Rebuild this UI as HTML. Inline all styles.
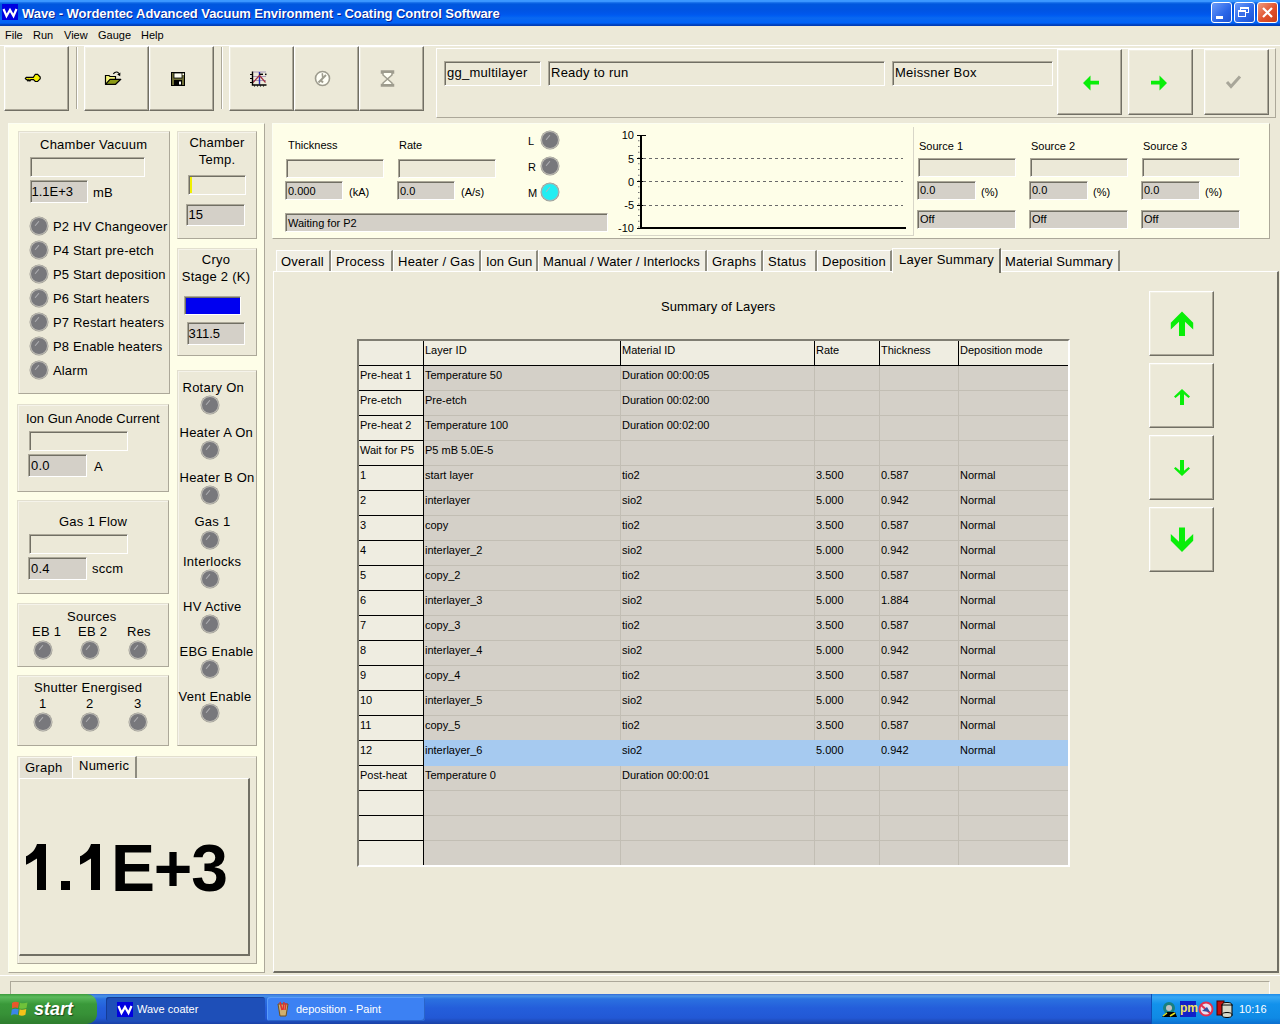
<!DOCTYPE html>
<html><head><meta charset="utf-8">
<style>
*{box-sizing:border-box}
body{margin:0;width:1280px;height:1024px;overflow:hidden;background:#ECE9D8;font-family:"Liberation Sans",sans-serif;position:relative;color:#000}
.a{position:absolute}
.t{position:absolute;font-size:13px;line-height:13px;white-space:nowrap;letter-spacing:0.25px}
.s{position:absolute;font-size:11px;line-height:11px;white-space:nowrap}
.cr{position:absolute;background:#FEFEE8;border-top:1px solid #FCFEF2;border-left:1px solid #FCFEF2;border-right:1px solid #ACA899;border-bottom:1px solid #ACA899}
.g{position:absolute;background:#ECE9D8;border-top:1px solid #E2DFCF;border-left:1px solid #E2DFCF;border-right:1px solid #ACA899;border-bottom:1px solid #ACA899;box-shadow:inset 1px 1px #F5F3EA}
.btn{position:absolute;background:#ECE9D8;border:1px solid;border-color:#fff #716F64 #716F64 #fff;box-shadow:inset -1px -1px #ACA899,inset 1px 1px #F1EFE2}
.sk{position:absolute;border:1px solid;border-color:#ACA899 #fff #fff #ACA899;box-shadow:inset 1px 1px #716F64}
.pb{background:#ECE9D8}
.vb{background:#D4D0C8}
.led{position:absolute;width:18px;height:18px;border-radius:50%;background:#78787C;border:1.5px solid #C4C2BA;box-shadow:0 0 0 0.5px #9A9890}
.led:after{content:"";position:absolute;left:3px;top:5px;width:6px;height:1px;background:#B4B4B8;transform:rotate(-50deg)}
.tab{position:absolute;top:250px;height:21px;background:#F0EEE3;border-top:1px solid #fff;border-left:1px solid #fff;border-right:2px solid #8E8C80}
</style></head><body>

<!-- Title bar -->
<div class="a" style="left:0;top:0;width:1280px;height:26px;background:linear-gradient(#3D9BFF 0px,#3A95FF 1.5px,#1A74EC 2.5px,#0058DE 4px,#0054E3 10px,#0057EC 14px,#005EF2 16px,#0A68F0 18px,#0062F8 23px,#0046C6 24.5px,#0038B0 26px)"></div>
<div class="a" style="left:2px;top:4px;width:16px;height:16px;background:#0000E0"></div>
<svg class="a" style="left:2px;top:4px" width="16" height="16"><polyline points="1.5,5 4.5,12 8,6 11.5,12 14.5,5" fill="none" stroke="#fff" stroke-width="2.2"/></svg>
<div class="a" style="left:22px;top:6.5px;font-size:13px;line-height:13px;font-weight:bold;color:#fff;white-space:nowrap;letter-spacing:-0.06px;text-shadow:1px 1px #0A1E8C">Wave - Wordentec Advanced Vacuum Environment - Coating Control Software</div>
<div class="a" style="left:1211px;top:2px;width:21px;height:21px;border:1px solid #fff;border-radius:3px;background:linear-gradient(135deg,#6C9BF9,#2A66E8 60%,#1D52D2)"><div class="a" style="left:4px;top:13px;width:7px;height:3px;background:#fff"></div></div>
<div class="a" style="left:1234px;top:2px;width:21px;height:21px;border:1px solid #fff;border-radius:3px;background:linear-gradient(135deg,#6C9BF9,#2A66E8 60%,#1D52D2)"><div class="a" style="left:5px;top:4px;width:9px;height:6px;border:1px solid #fff;border-top-width:2px"></div><div class="a" style="left:3px;top:7px;width:8px;height:7px;border:1px solid #fff;border-top-width:2px;background:#3A6FE8"></div></div>
<div class="a" style="left:1257px;top:2px;width:21px;height:21px;border:1px solid #fff;border-radius:3px;background:linear-gradient(135deg,#F09A7E,#E0512C 55%,#C9401A)"><svg class="a" style="left:3px;top:3px" width="13" height="13"><path d="M2,2 L11,11 M11,2 L2,11" stroke="#fff" stroke-width="2.2"/></svg></div>

<!-- Menu -->
<div class="s" style="left:5px;top:30px">File</div>
<div class="s" style="left:33px;top:30px">Run</div>
<div class="s" style="left:64px;top:30px">View</div>
<div class="s" style="left:98px;top:30px">Gauge</div>
<div class="s" style="left:141px;top:30px">Help</div>

<!-- toolbar -->
<div class="a" style="left:0;top:45px;width:1280px;height:1px;background:#fff"></div>
<div class="btn" style="left:4px;top:46px;width:65px;height:65px"></div>
<div class="a" style="left:76px;top:47px;width:1px;height:62px;background:#ACA899"></div><div class="a" style="left:77px;top:47px;width:1px;height:62px;background:#fff"></div>
<div class="btn" style="left:84px;top:46px;width:65px;height:65px"></div>
<div class="btn" style="left:149px;top:46px;width:65px;height:65px"></div>
<div class="a" style="left:221px;top:47px;width:1px;height:62px;background:#ACA899"></div><div class="a" style="left:222px;top:47px;width:1px;height:62px;background:#fff"></div>
<div class="btn" style="left:229px;top:46px;width:65px;height:65px"></div>
<div class="btn" style="left:294px;top:46px;width:65px;height:65px"></div>
<div class="btn" style="left:359px;top:46px;width:65px;height:65px"></div>

<!-- status panel -->
<div class="a" style="left:436px;top:48px;width:840px;height:70px;border:1px solid;border-color:#fff #ACA899 #ACA899 #fff"></div>
<div class="sk" style="left:444px;top:61px;width:97px;height:25px"></div>
<div class="t" style="left:447px;top:66px">gg_multilayer</div>
<div class="sk" style="left:548px;top:61px;width:337px;height:25px"></div>
<div class="t" style="left:551px;top:66px">Ready to run</div>
<div class="sk" style="left:892px;top:61px;width:161px;height:25px"></div>
<div class="t" style="left:895px;top:66px">Meissner Box</div>
<div class="btn" style="left:1057px;top:49px;width:65px;height:66px"></div>
<div class="btn" style="left:1128px;top:49px;width:65px;height:66px"></div>
<div class="btn" style="left:1204px;top:49px;width:65px;height:66px"></div>


<!-- toolbar icons -->
<svg class="a" style="left:24px;top:73px" width="18" height="11"><path d="M1.3,5.3 L2.3,4.3 H9.3 L11.3,1.3 H13.6 L16.2,4 V5.8 L13.6,8.5 H11.3 L9.5,6.6 H6.8 L5.9,8 L4.9,6.6 L4,8 L3.1,6.6 H2.3 Z" fill="#F4F000" stroke="#000" stroke-width="1.15"/></svg>
<svg class="a" style="left:104px;top:70px" width="18" height="16"><rect x="2" y="6" width="9.5" height="8" fill="#F5F57A"/><path d="M1.5,14.5 V5.5 H5 L6,6.5 H11.5 V9.3" fill="none" stroke="#000" stroke-width="1.2"/><path d="M1.5,14.3 L6,9.3 H16.8 L11.6,14.3 Z" fill="#8C9A14" stroke="#000" stroke-width="1.2" stroke-linejoin="round"/><path d="M9.3,3.9 Q11,1.6 13,2 Q14.3,2.3 15,3.6" fill="none" stroke="#000" stroke-width="1.1"/><path d="M13.2,4.6 L16.4,2.6 L16.2,6.2 Z" fill="#000"/></svg>
<svg class="a" style="left:171px;top:72px" width="14" height="14"><rect x="0.5" y="0.5" width="13" height="13" fill="#6E6E36" stroke="#000"/><rect x="3" y="1" width="8" height="5" fill="#FDFDF0" stroke="#000" stroke-width="0.8"/><rect x="3" y="8" width="8" height="5.5" fill="#000"/><rect x="8" y="9.5" width="2" height="3" fill="#fff"/><rect x="11.5" y="1.5" width="1.5" height="1.5" fill="#fff"/></svg>
<svg class="a" style="left:248px;top:70px" width="20" height="18"><path d="M4.5,2 H18 M4.5,6.5 H18 M4.5,10.5 H18" stroke="#A898B8" stroke-width="1"/><path d="M11.5,2 V14.5" stroke="#2828B0" stroke-width="1.4"/><path d="M5,12.5 L11.5,5.5 L17.5,12.5" stroke="#A03040" stroke-width="1.2" fill="none"/><g stroke="#000" fill="none"><path d="M4.5,1.5 V15 H18.5" stroke-width="1.4"/><path d="M2,4.5 H4 M2,8.5 H4 M2,12.5 H4 M6.5,16.5 V15.5 M9.5,16.5 V15.5 M12.5,16.5 V15.5 M15.5,16.5 V15.5" stroke-width="1"/><path d="M11.5,4.3 H15" stroke-width="1.4"/></g><rect x="17" y="3.6" width="1.5" height="1.5" fill="#000"/></svg>
<svg class="a" style="left:314px;top:70px" width="17" height="17"><circle cx="8.5" cy="8.5" r="7" fill="#FFFFF6" stroke="#9E9C8E" stroke-width="1.6"/><path d="M4.5,12.5 L12,5" stroke="#9E9C8E" stroke-width="2"/><path d="M7.5,3.5 L9,3 L9.5,7 L8,8.5 Z" fill="#9E9C8E"/><path d="M7,10.5 L9,12.5" stroke="#9E9C8E" stroke-width="2"/></svg>
<svg class="a" style="left:380px;top:70px" width="15" height="17"><path d="M1.5,1 H13.5 V3 H12 L12,5 L7.5,9 L12,13 V14.5 H13.5 V16 H1.5 V14.5 H3 V13 L7.5,9 L3,5 V3 H1.5 Z" fill="#FFFFF4" stroke="#9E9C8E" stroke-width="1.5"/><rect x="2" y="14" width="11" height="2" fill="#9E9C8E"/><rect x="2" y="1" width="11" height="2" fill="#9E9C8E"/></svg>
<svg class="a" style="left:1082px;top:74px" width="18" height="18"><path d="M1,9 L8.5,1.5 L8.5,6.8 L17,6.8 L17,10.5 L8.5,10.5 L8.5,16.5 Z" fill="#09EE09"/></svg>
<svg class="a" style="left:1150px;top:74px" width="18" height="18"><path d="M17,9 L9.5,1.5 L9.5,6.8 L1,6.8 L1,10.5 L9.5,10.5 L9.5,16.5 Z" fill="#09EE09"/></svg>
<svg class="a" style="left:1225px;top:74px" width="18" height="16"><path d="M2,8 L6,12.5 L15,2.5" fill="none" stroke="#A8A699" stroke-width="3"/></svg>

<!-- left cream panel -->
<div class="cr" style="left:8px;top:123px;width:257px;height:850px"></div>
<div class="g" style="left:18px;top:131px;width:152px;height:263px"></div>
<div class="t" style="left:40px;top:138px">Chamber Vacuum</div>
<div class="sk pb" style="left:30px;top:157px;width:115px;height:20px"></div>
<div class="sk vb" style="left:30px;top:180px;width:58px;height:23px"></div>
<div class="t" style="left:31.5px;top:185px;letter-spacing:0">1.1E+3</div>
<div class="t" style="left:93px;top:186px">mB</div>
<div class="led" style="left:30px;top:217px"></div><div class="t" style="left:53px;top:220px;letter-spacing:0.15px">P2 HV Changeover</div>
<div class="led" style="left:30px;top:241px"></div><div class="t" style="left:53px;top:244px;letter-spacing:0.15px">P4 Start pre-etch</div>
<div class="led" style="left:30px;top:265px"></div><div class="t" style="left:53px;top:268px;letter-spacing:0.15px">P5 Start deposition</div>
<div class="led" style="left:30px;top:289px"></div><div class="t" style="left:53px;top:292px;letter-spacing:0.15px">P6 Start heaters</div>
<div class="led" style="left:30px;top:313px"></div><div class="t" style="left:53px;top:316px;letter-spacing:0.15px">P7 Restart heaters</div>
<div class="led" style="left:30px;top:337px"></div><div class="t" style="left:53px;top:340px;letter-spacing:0.15px">P8 Enable heaters</div>
<div class="led" style="left:30px;top:361px"></div><div class="t" style="left:53px;top:364px;letter-spacing:0.15px">Alarm</div>

<div class="g" style="left:177px;top:131px;width:80px;height:108px"></div>
<div class="t" style="left:177px;top:136px;width:80px;text-align:center">Chamber</div>
<div class="t" style="left:177px;top:153px;width:80px;text-align:center">Temp.</div>
<div class="sk pb" style="left:188px;top:175px;width:58px;height:20px"><div class="a" style="left:1px;top:1px;width:2px;height:16px;background:#F0F000"></div></div>
<div class="sk vb" style="left:186px;top:204px;width:59px;height:22px"></div>
<div class="t" style="left:188.5px;top:208px;letter-spacing:0">15</div>

<div class="g" style="left:177px;top:248px;width:80px;height:108px"></div>
<div class="t" style="left:177px;top:253px;width:78px;text-align:center">Cryo</div>
<div class="t" style="left:177px;top:270px;width:78px;text-align:center">Stage 2 (K)</div>
<div class="sk" style="left:184px;top:296px;width:57px;height:19px;background:#0000F0"></div>
<div class="sk vb" style="left:187px;top:322px;width:58px;height:23px"></div>
<div class="t" style="left:188.5px;top:327px;letter-spacing:0">311.5</div>

<div class="g" style="left:177px;top:370px;width:80px;height:376px"></div>
<div class="t" style="left:182.5px;top:381px">Rotary On</div><div class="led" style="left:201px;top:396px"></div>
<div class="t" style="left:179.5px;top:426px">Heater A On</div><div class="led" style="left:201px;top:441px"></div>
<div class="t" style="left:179.5px;top:471px">Heater B On</div><div class="led" style="left:201px;top:486px"></div>
<div class="t" style="left:194.5px;top:515px">Gas 1</div><div class="led" style="left:201px;top:531px"></div>
<div class="t" style="left:183px;top:555px">Interlocks</div><div class="led" style="left:201px;top:570px"></div>
<div class="t" style="left:183px;top:600px">HV Active</div><div class="led" style="left:201px;top:615px"></div>
<div class="t" style="left:179.5px;top:645px">EBG Enable</div><div class="led" style="left:201px;top:660px"></div>
<div class="t" style="left:178.5px;top:690px">Vent Enable</div><div class="led" style="left:201px;top:704px"></div>

<div class="g" style="left:17px;top:404px;width:152px;height:88px"></div>
<div class="t" style="left:26px;top:412px;letter-spacing:0">Ion Gun Anode Current</div>
<div class="sk pb" style="left:29px;top:431px;width:99px;height:20px"></div>
<div class="sk vb" style="left:28px;top:454px;width:59px;height:23px"></div>
<div class="t" style="left:31px;top:459px">0.0</div>
<div class="t" style="left:94px;top:460px">A</div>

<div class="g" style="left:17px;top:500px;width:152px;height:94px"></div>
<div class="t" style="left:59px;top:515px">Gas 1 Flow</div>
<div class="sk pb" style="left:29px;top:534px;width:99px;height:20px"></div>
<div class="sk vb" style="left:28px;top:557px;width:59px;height:23px"></div>
<div class="t" style="left:31px;top:562px">0.4</div>
<div class="t" style="left:92px;top:562px">sccm</div>

<div class="g" style="left:17px;top:603px;width:152px;height:64px"></div>
<div class="t" style="left:67px;top:610px">Sources</div>
<div class="t" style="left:32px;top:625px">EB 1</div>
<div class="t" style="left:78px;top:625px">EB 2</div>
<div class="t" style="left:127px;top:625px">Res</div>
<div class="led" style="left:34px;top:641px"></div><div class="led" style="left:81px;top:641px"></div><div class="led" style="left:129px;top:641px"></div>

<div class="g" style="left:17px;top:675px;width:152px;height:71px"></div>
<div class="t" style="left:34px;top:681px">Shutter Energised</div>
<div class="t" style="left:39px;top:697px">1</div>
<div class="t" style="left:86px;top:697px">2</div>
<div class="t" style="left:134px;top:697px">3</div>
<div class="led" style="left:34px;top:713px"></div><div class="led" style="left:81px;top:713px"></div><div class="led" style="left:129px;top:713px"></div>

<!-- bottom tabs (Graph/Numeric) -->
<div class="g" style="left:17px;top:756px;width:240px;height:208px"></div>
<div class="a" style="left:19px;top:757px;width:53px;height:22px;background:#E4E1D4;border-top:1px solid #F8F7F0;border-left:1px solid #F8F7F0"></div>
<div class="t" style="left:25px;top:761px">Graph</div>
<div class="a" style="left:72px;top:756px;width:65px;height:23px;background:#ECE9D8;border-top:1px solid #fff;border-left:1px solid #fff;border-right:2px solid #8E8C80"></div>
<div class="t" style="left:79px;top:759px">Numeric</div>
<div class="a" style="left:19px;top:778px;width:231px;height:178px;background:#ECE9D8;border-top:1px solid #fff;border-left:1px solid #fff;border-right:2px solid #716F64;border-bottom:2px solid #716F64"></div>
<svg class="a" style="left:0;top:830px" width="120" height="70"><g fill="#000" transform="translate(0,-830)"><path d="M26,856.3 C31,854 35,850.5 37,844 H46 V890 H37 V858.4 C33,861 29.5,863 26,864.7 Z"/><rect x="61" y="881" width="9" height="9"/><path d="M80,856.3 C85,854 89,850.5 91,844 H100 V890 H91 V858.4 C87,861 83.5,863 80,864.7 Z"/></g></svg>
<div class="a" style="left:111px;top:835px;font-size:66px;line-height:66px;font-weight:bold;letter-spacing:-1.2px;white-space:nowrap">E+3</div>


<!-- top right cream panel -->
<div class="cr" style="left:272px;top:123px;width:998px;height:116px"></div>
<div class="s" style="left:288px;top:140px">Thickness</div>
<div class="sk pb" style="left:286px;top:159px;width:98px;height:19px"></div>
<div class="sk vb" style="left:285px;top:181px;width:58px;height:19px"></div>
<div class="s" style="left:288px;top:186px">0.000</div>
<div class="s" style="left:349px;top:187px">(kA)</div>
<div class="s" style="left:399px;top:140px">Rate</div>
<div class="sk pb" style="left:398px;top:159px;width:98px;height:19px"></div>
<div class="sk vb" style="left:397px;top:181px;width:58px;height:19px"></div>
<div class="s" style="left:400px;top:186px">0.0</div>
<div class="s" style="left:461px;top:187px">(A/s)</div>
<div class="sk vb" style="left:285px;top:213px;width:323px;height:19px"></div>
<div class="s" style="left:288px;top:218px">Waiting for P2</div>
<div class="s" style="left:528px;top:136px">L</div><div class="led" style="left:541px;top:131px"></div>
<div class="s" style="left:528px;top:162px">R</div><div class="led" style="left:541px;top:157px"></div>
<div class="s" style="left:528px;top:188px">M</div><div class="led" style="left:541px;top:183px;background:#22EEF2;border-color:#A8B4B4"></div>
<div class="a" style="left:620px;top:127px;width:294px;height:109px;border-right:1px solid #D8D6C8;border-bottom:1px solid #D8D6C8"></div>
<svg class="a" style="left:600px;top:128px" width="320" height="110">
<g font-family="Liberation Sans" font-size="11" text-anchor="end" fill="#000"><text x="34" y="11">10</text><text x="34" y="34.5">5</text><text x="34" y="57.5">0</text><text x="34" y="81">-5</text><text x="34" y="104">-10</text></g>
<path d="M38.75,12.25 V100" stroke="#707070" stroke-width="1.5" stroke-dasharray="1,4.75"/>
<path d="M41,7 V100 H306" stroke="#000" stroke-width="2" fill="none"/>
<path d="M37,7.5 H46 M37,30.5 H44 M37,53.5 H44 M37,77.5 H44 M37,100.5 H42" stroke="#000" stroke-width="1"/>
<path d="M43,30.5 H303 M43,53.5 H303 M43,77.5 H303" stroke="#6A6A6A" stroke-width="1" stroke-dasharray="3,3"/>
</svg>
<div class="s" style="left:919px;top:141px">Source 1</div>
<div class="sk pb" style="left:918px;top:158px;width:98px;height:19px"></div>
<div class="sk vb" style="left:917px;top:181px;width:59px;height:19px"></div>
<div class="s" style="left:920px;top:185px">0.0</div>
<div class="s" style="left:981px;top:187px">(%)</div>
<div class="sk vb" style="left:917px;top:210px;width:99px;height:19px"></div>
<div class="s" style="left:920px;top:214px">Off</div>
<div class="s" style="left:1031px;top:141px">Source 2</div>
<div class="sk pb" style="left:1030px;top:158px;width:98px;height:19px"></div>
<div class="sk vb" style="left:1029px;top:181px;width:59px;height:19px"></div>
<div class="s" style="left:1032px;top:185px">0.0</div>
<div class="s" style="left:1093px;top:187px">(%)</div>
<div class="sk vb" style="left:1029px;top:210px;width:99px;height:19px"></div>
<div class="s" style="left:1032px;top:214px">Off</div>
<div class="s" style="left:1143px;top:141px">Source 3</div>
<div class="sk pb" style="left:1142px;top:158px;width:98px;height:19px"></div>
<div class="sk vb" style="left:1141px;top:181px;width:59px;height:19px"></div>
<div class="s" style="left:1144px;top:185px">0.0</div>
<div class="s" style="left:1205px;top:187px">(%)</div>
<div class="sk vb" style="left:1141px;top:210px;width:99px;height:19px"></div>
<div class="s" style="left:1144px;top:214px">Off</div>

<!-- tab strip -->
<div class="a" style="left:273px;top:271px;width:1006px;height:702px;background:#ECE9D8;border-top:1px solid #fff;border-left:1px solid #fff;border-right:2px solid #716F64;border-bottom:2px solid #716F64"></div>
<div class="tab" style="left:276px;width:55px"></div><div class="t" style="left:281px;top:255px">Overall</div>
<div class="tab" style="left:331px;width:62px"></div><div class="t" style="left:336px;top:255px">Process</div>
<div class="tab" style="left:393px;width:88px"></div><div class="t" style="left:398px;top:255px">Heater / Gas</div>
<div class="tab" style="left:481px;width:57px"></div><div class="t" style="left:486px;top:255px;letter-spacing:0">Ion Gun</div>
<div class="tab" style="left:538px;width:169px"></div><div class="t" style="left:543px;top:255px;letter-spacing:0.1px">Manual / Water / Interlocks</div>
<div class="tab" style="left:707px;width:56px"></div><div class="t" style="left:712px;top:255px">Graphs</div>
<div class="tab" style="left:763px;width:54px"></div><div class="t" style="left:768px;top:255px">Status</div>
<div class="tab" style="left:817px;width:75px"></div><div class="t" style="left:822px;top:255px">Deposition</div>
<div class="a" style="left:892px;top:248px;width:109px;height:25px;background:#ECE9D8;border-top:1px solid #fff;border-left:1px solid #fff;border-right:2px solid #716F64"></div><div class="t" style="left:899px;top:253px">Layer Summary</div>
<div class="tab" style="left:1001px;width:119px"></div><div class="t" style="left:1005px;top:255px;letter-spacing:0.15px">Material Summary</div>

<div class="t" style="left:661px;top:300px;letter-spacing:0.1px">Summary of Layers</div>


<!-- table -->
<div class="a" style="left:357px;top:339px;width:713px;height:528px;border:2px solid;border-color:#7F7D72 #fff #fff #7F7D72"></div>
<div class="a" style="left:359px;top:341px;width:709px;height:25px;background:#EFEDE1"></div>
<div class="a" style="left:359px;top:366px;width:64px;height:499px;background:#EFEDE1"></div>
<div class="a" style="left:424px;top:366px;width:644px;height:499px;background:#D4D0C8"></div>
<div class="a" style="left:424px;top:390px;width:644px;height:1px;background:#C2BEB4"></div>
<div class="a" style="left:359px;top:390px;width:64px;height:1px;background:#000"></div>
<div class="a" style="left:424px;top:415px;width:644px;height:1px;background:#C2BEB4"></div>
<div class="a" style="left:359px;top:415px;width:64px;height:1px;background:#000"></div>
<div class="a" style="left:424px;top:440px;width:644px;height:1px;background:#C2BEB4"></div>
<div class="a" style="left:359px;top:440px;width:64px;height:1px;background:#000"></div>
<div class="a" style="left:424px;top:465px;width:644px;height:1px;background:#C2BEB4"></div>
<div class="a" style="left:359px;top:465px;width:64px;height:1px;background:#000"></div>
<div class="a" style="left:424px;top:490px;width:644px;height:1px;background:#C2BEB4"></div>
<div class="a" style="left:359px;top:490px;width:64px;height:1px;background:#000"></div>
<div class="a" style="left:424px;top:515px;width:644px;height:1px;background:#C2BEB4"></div>
<div class="a" style="left:359px;top:515px;width:64px;height:1px;background:#000"></div>
<div class="a" style="left:424px;top:540px;width:644px;height:1px;background:#C2BEB4"></div>
<div class="a" style="left:359px;top:540px;width:64px;height:1px;background:#000"></div>
<div class="a" style="left:424px;top:565px;width:644px;height:1px;background:#C2BEB4"></div>
<div class="a" style="left:359px;top:565px;width:64px;height:1px;background:#000"></div>
<div class="a" style="left:424px;top:590px;width:644px;height:1px;background:#C2BEB4"></div>
<div class="a" style="left:359px;top:590px;width:64px;height:1px;background:#000"></div>
<div class="a" style="left:424px;top:615px;width:644px;height:1px;background:#C2BEB4"></div>
<div class="a" style="left:359px;top:615px;width:64px;height:1px;background:#000"></div>
<div class="a" style="left:424px;top:640px;width:644px;height:1px;background:#C2BEB4"></div>
<div class="a" style="left:359px;top:640px;width:64px;height:1px;background:#000"></div>
<div class="a" style="left:424px;top:665px;width:644px;height:1px;background:#C2BEB4"></div>
<div class="a" style="left:359px;top:665px;width:64px;height:1px;background:#000"></div>
<div class="a" style="left:424px;top:690px;width:644px;height:1px;background:#C2BEB4"></div>
<div class="a" style="left:359px;top:690px;width:64px;height:1px;background:#000"></div>
<div class="a" style="left:424px;top:715px;width:644px;height:1px;background:#C2BEB4"></div>
<div class="a" style="left:359px;top:715px;width:64px;height:1px;background:#000"></div>
<div class="a" style="left:424px;top:740px;width:644px;height:1px;background:#C2BEB4"></div>
<div class="a" style="left:359px;top:740px;width:64px;height:1px;background:#000"></div>
<div class="a" style="left:424px;top:765px;width:644px;height:1px;background:#C2BEB4"></div>
<div class="a" style="left:359px;top:765px;width:64px;height:1px;background:#000"></div>
<div class="a" style="left:424px;top:790px;width:644px;height:1px;background:#C2BEB4"></div>
<div class="a" style="left:359px;top:790px;width:64px;height:1px;background:#000"></div>
<div class="a" style="left:424px;top:815px;width:644px;height:1px;background:#C2BEB4"></div>
<div class="a" style="left:359px;top:815px;width:64px;height:1px;background:#000"></div>
<div class="a" style="left:424px;top:840px;width:644px;height:1px;background:#C2BEB4"></div>
<div class="a" style="left:359px;top:840px;width:64px;height:1px;background:#000"></div>
<div class="a" style="left:620px;top:366px;width:1px;height:499px;background:#C2BEB4"></div>
<div class="a" style="left:814px;top:366px;width:1px;height:499px;background:#C2BEB4"></div>
<div class="a" style="left:879px;top:366px;width:1px;height:499px;background:#C2BEB4"></div>
<div class="a" style="left:958px;top:366px;width:1px;height:499px;background:#C2BEB4"></div>
<div class="a" style="left:359px;top:365px;width:709px;height:1px;background:#000"></div>
<div class="a" style="left:423px;top:341px;width:1px;height:25px;background:#000"></div>
<div class="a" style="left:620px;top:341px;width:1px;height:25px;background:#000"></div>
<div class="a" style="left:814px;top:341px;width:1px;height:25px;background:#000"></div>
<div class="a" style="left:879px;top:341px;width:1px;height:25px;background:#000"></div>
<div class="a" style="left:958px;top:341px;width:1px;height:25px;background:#000"></div>
<div class="a" style="left:423px;top:366px;width:1px;height:499px;background:#000"></div>
<div class="a" style="left:424px;top:740px;width:644px;height:26px;background:#A6CAF0"></div>
<div class="s" style="left:425px;top:345px">Layer ID</div>
<div class="s" style="left:622px;top:345px">Material ID</div>
<div class="s" style="left:816px;top:345px">Rate</div>
<div class="s" style="left:881px;top:345px">Thickness</div>
<div class="s" style="left:960px;top:345px">Deposition mode</div>
<div class="s" style="left:360px;top:370px">Pre-heat 1</div>
<div class="s" style="left:425px;top:370px">Temperature 50</div>
<div class="s" style="left:622px;top:370px">Duration 00:00:05</div>
<div class="s" style="left:360px;top:395px">Pre-etch</div>
<div class="s" style="left:425px;top:395px">Pre-etch</div>
<div class="s" style="left:622px;top:395px">Duration 00:02:00</div>
<div class="s" style="left:360px;top:420px">Pre-heat 2</div>
<div class="s" style="left:425px;top:420px">Temperature 100</div>
<div class="s" style="left:622px;top:420px">Duration 00:02:00</div>
<div class="s" style="left:360px;top:445px">Wait for P5</div>
<div class="s" style="left:425px;top:445px">P5 mB 5.0E-5</div>
<div class="s" style="left:360px;top:470px">1</div>
<div class="s" style="left:425px;top:470px">start layer</div>
<div class="s" style="left:622px;top:470px">tio2</div>
<div class="s" style="left:816px;top:470px">3.500</div>
<div class="s" style="left:881px;top:470px">0.587</div>
<div class="s" style="left:960px;top:470px">Normal</div>
<div class="s" style="left:360px;top:495px">2</div>
<div class="s" style="left:425px;top:495px">interlayer</div>
<div class="s" style="left:622px;top:495px">sio2</div>
<div class="s" style="left:816px;top:495px">5.000</div>
<div class="s" style="left:881px;top:495px">0.942</div>
<div class="s" style="left:960px;top:495px">Normal</div>
<div class="s" style="left:360px;top:520px">3</div>
<div class="s" style="left:425px;top:520px">copy</div>
<div class="s" style="left:622px;top:520px">tio2</div>
<div class="s" style="left:816px;top:520px">3.500</div>
<div class="s" style="left:881px;top:520px">0.587</div>
<div class="s" style="left:960px;top:520px">Normal</div>
<div class="s" style="left:360px;top:545px">4</div>
<div class="s" style="left:425px;top:545px">interlayer_2</div>
<div class="s" style="left:622px;top:545px">sio2</div>
<div class="s" style="left:816px;top:545px">5.000</div>
<div class="s" style="left:881px;top:545px">0.942</div>
<div class="s" style="left:960px;top:545px">Normal</div>
<div class="s" style="left:360px;top:570px">5</div>
<div class="s" style="left:425px;top:570px">copy_2</div>
<div class="s" style="left:622px;top:570px">tio2</div>
<div class="s" style="left:816px;top:570px">3.500</div>
<div class="s" style="left:881px;top:570px">0.587</div>
<div class="s" style="left:960px;top:570px">Normal</div>
<div class="s" style="left:360px;top:595px">6</div>
<div class="s" style="left:425px;top:595px">interlayer_3</div>
<div class="s" style="left:622px;top:595px">sio2</div>
<div class="s" style="left:816px;top:595px">5.000</div>
<div class="s" style="left:881px;top:595px">1.884</div>
<div class="s" style="left:960px;top:595px">Normal</div>
<div class="s" style="left:360px;top:620px">7</div>
<div class="s" style="left:425px;top:620px">copy_3</div>
<div class="s" style="left:622px;top:620px">tio2</div>
<div class="s" style="left:816px;top:620px">3.500</div>
<div class="s" style="left:881px;top:620px">0.587</div>
<div class="s" style="left:960px;top:620px">Normal</div>
<div class="s" style="left:360px;top:645px">8</div>
<div class="s" style="left:425px;top:645px">interlayer_4</div>
<div class="s" style="left:622px;top:645px">sio2</div>
<div class="s" style="left:816px;top:645px">5.000</div>
<div class="s" style="left:881px;top:645px">0.942</div>
<div class="s" style="left:960px;top:645px">Normal</div>
<div class="s" style="left:360px;top:670px">9</div>
<div class="s" style="left:425px;top:670px">copy_4</div>
<div class="s" style="left:622px;top:670px">tio2</div>
<div class="s" style="left:816px;top:670px">3.500</div>
<div class="s" style="left:881px;top:670px">0.587</div>
<div class="s" style="left:960px;top:670px">Normal</div>
<div class="s" style="left:360px;top:695px">10</div>
<div class="s" style="left:425px;top:695px">interlayer_5</div>
<div class="s" style="left:622px;top:695px">sio2</div>
<div class="s" style="left:816px;top:695px">5.000</div>
<div class="s" style="left:881px;top:695px">0.942</div>
<div class="s" style="left:960px;top:695px">Normal</div>
<div class="s" style="left:360px;top:720px">11</div>
<div class="s" style="left:425px;top:720px">copy_5</div>
<div class="s" style="left:622px;top:720px">tio2</div>
<div class="s" style="left:816px;top:720px">3.500</div>
<div class="s" style="left:881px;top:720px">0.587</div>
<div class="s" style="left:960px;top:720px">Normal</div>
<div class="s" style="left:360px;top:745px">12</div>
<div class="s" style="left:425px;top:745px">interlayer_6</div>
<div class="s" style="left:622px;top:745px">sio2</div>
<div class="s" style="left:816px;top:745px">5.000</div>
<div class="s" style="left:881px;top:745px">0.942</div>
<div class="s" style="left:960px;top:745px">Normal</div>
<div class="s" style="left:360px;top:770px">Post-heat</div>
<div class="s" style="left:425px;top:770px">Temperature 0</div>
<div class="s" style="left:622px;top:770px">Duration 00:00:01</div>
<!-- arrow buttons -->
<div class="btn" style="left:1149px;top:291px;width:65px;height:65px"></div>
<div class="btn" style="left:1149px;top:363px;width:65px;height:65px"></div>
<div class="btn" style="left:1149px;top:435px;width:65px;height:65px"></div>
<div class="btn" style="left:1149px;top:507px;width:65px;height:65px"></div>
<svg class="a" style="left:1160px;top:300px" width="44" height="44"><path d="M22,11.5 L33.2,22.8 L33.2,29.5 L25,21.8 L25,36 L19,36 L19,21.8 L10.8,29.5 L10.8,22.8 Z" fill="#09EE09"/></svg>
<svg class="a" style="left:1166px;top:380px" width="32" height="32"><path d="M16,9 L24,16.5 L22.5,18 L18,14.2 L18,25 L14,25 L14,14.2 L9.5,18 L8,16.5 Z" fill="#09EE09"/></svg>
<svg class="a" style="left:1166px;top:451px" width="32" height="32"><path d="M16,25 L24,17.5 L22.5,16 L18,19.8 L18,9 L14,9 L14,19.8 L9.5,16 L8,17.5 Z" fill="#09EE09"/></svg>
<svg class="a" style="left:1160px;top:516px" width="44" height="44"><path d="M22,36 L33.2,24.7 L33.2,18 L25,25.7 L25,11.5 L19,11.5 L19,25.7 L10.8,18 L10.8,24.7 Z" fill="#09EE09"/></svg>

<!-- status bar -->
<div class="a" style="left:0;top:975px;width:1280px;height:1px;background:#fff"></div>
<div class="a" style="left:10px;top:981px;width:1260px;height:14px;border-top:1px solid #ACA899;border-left:1px solid #ACA899;border-right:1px solid #fff"></div>

<!-- taskbar -->
<div class="a" style="left:0;top:994px;width:1280px;height:30px;background:linear-gradient(#3168D5 0px,#4993E6 2px,#2B71E0 5px,#245EDB 14px,#2258D5 24px,#1941A5 30px)"></div>
<div class="a" style="left:0;top:994px;width:97px;height:30px;border-radius:0 10px 10px 0;background:linear-gradient(#3C9C3C 0px,#5CBA5C 3px,#3A993A 10px,#379137 20px,#2E7D2E 30px)"></div>
<svg class="a" style="left:11px;top:1000px" width="18" height="18"><path d="M1,3 Q4,1 8,2.5 L7,8 Q4,7 1,8.5 Z" fill="#E9562B"/><path d="M9,2.7 Q12,4 16.5,2.5 L15.5,8 Q12,9.5 8,8.3 Z" fill="#6FC23A"/><path d="M0.8,9.5 Q4,8 7.7,9.3 L6.8,15 Q3.5,13.5 0,15.5 Z" fill="#3B86E8"/><path d="M8.6,9.3 Q12,10.5 15.3,9 L14.4,14.8 Q11,16.5 7.8,15 Z" fill="#F4C21A"/></svg>
<div class="a" style="left:34px;top:1000px;font-size:18px;line-height:18px;font-weight:bold;font-style:italic;color:#fff;text-shadow:1px 1px 1px #1C4A1C;white-space:nowrap">start</div>
<div class="a" style="left:106px;top:997px;width:159px;height:24px;border-radius:3px;background:#1E4FB8;box-shadow:inset 1px 1px #153C95"></div>
<div class="a" style="left:117px;top:1002px;width:16px;height:15px;background:#0000E0"></div>
<svg class="a" style="left:117px;top:1002px" width="16" height="15"><polyline points="1.5,4 4.5,11 8,5 11.5,11 14.5,4" fill="none" stroke="#fff" stroke-width="2.2"/></svg>
<div class="s" style="left:137px;top:1004px;color:#fff">Wave coater</div>
<div class="a" style="left:267px;top:997px;width:158px;height:24px;border-radius:3px;background:#3C81F3;box-shadow:inset -1px -1px #2A64C8,inset 1px 1px #5A9CFA"></div>
<svg class="a" style="left:276px;top:1001px" width="14" height="17"><path d="M2,3 L12,3 L10,15 L4,15 Z" fill="#D0B070" stroke="#705020"/><path d="M4,1 L6,9 M8,1 L7,9 M10,2 L9,9" stroke="#E03030" stroke-width="1.5"/></svg>
<div class="s" style="left:296px;top:1004px;color:#fff">deposition - Paint</div>
<div class="a" style="left:1151px;top:994px;width:129px;height:30px;background:linear-gradient(#1D8BE8 0px,#38A8F4 3px,#1292EC 10px,#0F8AE5 24px,#0C6FCF 30px);border-left:1px solid #0F4FB8"></div>
<svg class="a" style="left:1161px;top:1001px" width="17" height="17"><circle cx="8" cy="7" r="6" fill="#188080"/><circle cx="8" cy="7" r="3" fill="#C0C0C0"/><path d="M1,16 L6,11 L14,11 L16,16 Z" fill="#000"/><path d="M2,15 L6,12 M9,15 L14,12" stroke="#E0E020" stroke-width="1.5"/></svg>
<div class="a" style="left:1180px;top:1001px;width:16px;height:16px;background:#1020C8;color:#F0E060;font-weight:bold;font-size:12px;line-height:14px;text-align:center">pm</div>
<svg class="a" style="left:1198px;top:1001px" width="16" height="17"><circle cx="8" cy="8" r="6.5" fill="#E8E0F0" stroke="#E03050" stroke-width="2"/><path d="M3,4 L13,13" stroke="#E03050" stroke-width="2"/><path d="M4,10 L9,6 L12,11 Z" fill="#3050A0"/></svg>
<svg class="a" style="left:1216px;top:1000px" width="17" height="18"><rect x="1" y="1" width="7" height="14" fill="#C01010" stroke="#400"/><ellipse cx="11" cy="5" rx="5" ry="2.5" fill="#E0E0D0" stroke="#000"/><rect x="6" y="5" width="10" height="10" fill="#D8D8C8" stroke="#000"/><ellipse cx="11" cy="15" rx="5" ry="2.5" fill="#D8D8C8" stroke="#000"/></svg>
<div class="s" style="left:1239px;top:1004px;color:#fff">10:16</div>

</body></html>
